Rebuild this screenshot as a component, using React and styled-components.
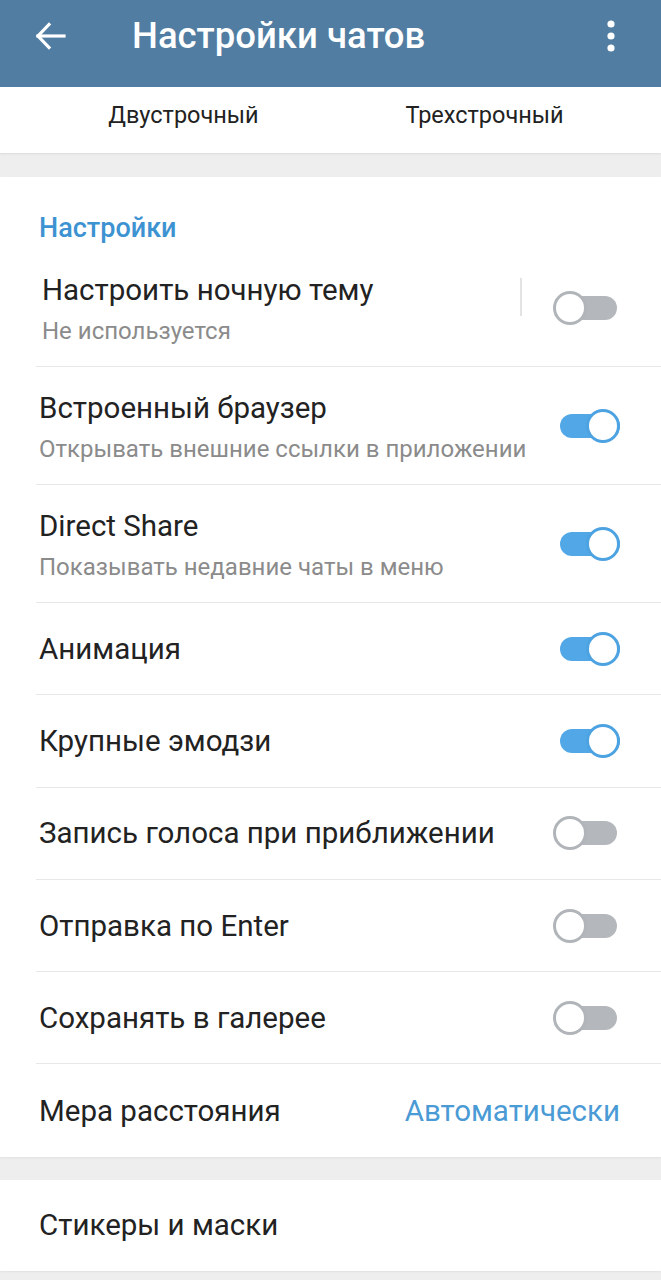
import React from 'react';
import styled, { createGlobalStyle } from 'styled-components';

const GlobalStyle = createGlobalStyle`
  body {
    margin: 0;
    background: #eeeeee;
    font-family: Roboto, "Noto Sans", Arial, sans-serif;
  }
`;

const Page = styled.div`
  width: 661px;
  min-height: 1280px;
  background: #eeeeee;
`;

const TopBar = styled.div`
  height: 87px;
  background: #517da2;
  display: flex;
  align-items: flex-start;
  padding: 16px 30px 0 30px;
  box-sizing: border-box;
  color: #fff;
`;

const IconButton = styled.div`
  height: 40px;
  width: 40px;
  display: flex;
  align-items: center;
  justify-content: center;
`;

const Title = styled.div`
  flex: 1;
  margin-left: 62px;
  font-size: 36.5px;
  font-weight: 500;
  line-height: 40px;
`;

const Tabs = styled.div`
  height: 66px;
  background: #fff;
  display: flex;
  align-items: center;
  padding: 0 26px 0 33px;
  box-shadow: 0 1px 2px rgba(0, 0, 0, 0.08);
`;

const Tab = styled.div`
  flex: 1;
  text-align: center;
  font-size: 23.5px;
  color: #222;
  padding-bottom: 10px;
`;

const Section = styled.div`
  background: #fff;
  margin-top: ${p => p.$gap || 24}px;
  box-shadow: 0 1px 2px rgba(0, 0, 0, 0.06);
`;

const SectionHeader = styled.div`
  padding: 36px 39px 6px;
  font-size: 27px;
  font-weight: 500;
  line-height: 30px;
  color: #3d93d2;
`;

const Row = styled.div`
  box-sizing: border-box;
  height: ${p => (p.$tall ? 118 : 92.3)}px;
  margin-left: 36px;
  padding: 0 41px 0 ${p => 3 + (p.$indent || 0)}px;
  display: flex;
  align-items: ${p => (p.$tall ? 'flex-start' : 'center')};
  border-bottom: ${p => (p.$last ? 'none' : '1px solid #e8e8e8')};
`;

const Texts = styled.div`
  flex: 1;
  padding-top: ${p => (p.$tall ? 25 : 0)}px;
`;

const RowTitle = styled.div`
  font-size: 29.5px;
  line-height: 32px;
  color: #222;
`;

const RowSub = styled.div`
  margin-top: 11px;
  font-size: 24px;
  line-height: 28px;
  color: #8b8b8b;
`;

const Value = styled.div`
  font-size: 29.5px;
  color: #4a9bd5;
`;

const Side = styled.div`
  display: flex;
  align-items: center;
  align-self: center;
`;

const VSep = styled.div`
  width: 2px;
  height: 38px;
  background: #e3e3e3;
  margin-right: 31px;
  margin-top: -21px;
`;

const SwitchBox = styled.div`
  position: relative;
  width: 64px;
  height: 36px;
  margin-right: ${p => (p.$on ? 0 : 3)}px;
`;

const Track = styled.div`
  position: absolute;
  left: 4px;
  right: 0;
  top: 6px;
  height: 24px;
  border-radius: 12px;
  background: ${p => (p.$on ? '#52a8e6' : '#b4b8bc')};
`;

const Knob = styled.div`
  position: absolute;
  top: 1px;
  ${p => (p.$on ? 'right: 0;' : 'left: 0;')}
  width: 34px;
  height: 34px;
  box-sizing: border-box;
  border-radius: 50%;
  background: #fff;
  border: 3.5px solid ${p => (p.$on ? '#4da3e2' : '#b1b5b9')};
`;

const Switch = ({ on }) => (
  <SwitchBox $on={on}>
    <Track $on={on} />
    <Knob $on={on} />
  </SwitchBox>
);

const rows = [
  { title: 'Встроенный браузер', sub: 'Открывать внешние ссылки в приложении', on: true },
  { title: 'Direct Share', sub: 'Показывать недавние чаты в меню', on: true },
  { title: 'Анимация', on: true },
  { title: 'Крупные эмодзи', on: true },
  { title: 'Запись голоса при приближении', on: false },
  { title: 'Отправка по Enter', on: false },
  { title: 'Сохранять в галерее', on: false },
];

export default function App() {
  return (
    <Page>
      <GlobalStyle />
      <TopBar>
        <IconButton>
          <svg width="32" height="32" viewBox="0 0 32 32" fill="none" stroke="#fff" strokeWidth="3.2" strokeLinecap="square">
            <path d="M30 16H4" />
            <path d="M15 4.5L4 16l11 11.5" />
          </svg>
        </IconButton>
        <Title>Настройки чатов</Title>
        <IconButton>
          <svg width="10" height="34" viewBox="0 0 10 34" fill="#fff">
            <circle cx="5" cy="5" r="3.6" />
            <circle cx="5" cy="17" r="3.6" />
            <circle cx="5" cy="29" r="3.6" />
          </svg>
        </IconButton>
      </TopBar>
      <Tabs>
        <Tab>Двустрочный</Tab>
        <Tab>Трехстрочный</Tab>
      </Tabs>

      <Section>
        <SectionHeader>Настройки</SectionHeader>
        <Row $tall $indent={3}>
          <Texts $tall>
            <RowTitle>Настроить ночную тему</RowTitle>
            <RowSub>Не используется</RowSub>
          </Texts>
          <Side>
            <VSep />
            <Switch on={false} />
          </Side>
        </Row>
        {rows.map(r => (
          <Row key={r.title} $tall={!!r.sub}>
            <Texts $tall={!!r.sub}>
              <RowTitle>{r.title}</RowTitle>
              {r.sub && <RowSub>{r.sub}</RowSub>}
            </Texts>
            <Side>
              <Switch on={r.on} />
            </Side>
          </Row>
        ))}
        <Row $last>
          <Texts>
            <RowTitle>Мера расстояния</RowTitle>
          </Texts>
          <Value>Автоматически</Value>
        </Row>
      </Section>

      <Section $gap={23}>
        <Row $last style={{ height: 91 }}>
          <Texts>
            <RowTitle>Стикеры и маски</RowTitle>
          </Texts>
        </Row>
      </Section>
    </Page>
  );
}
